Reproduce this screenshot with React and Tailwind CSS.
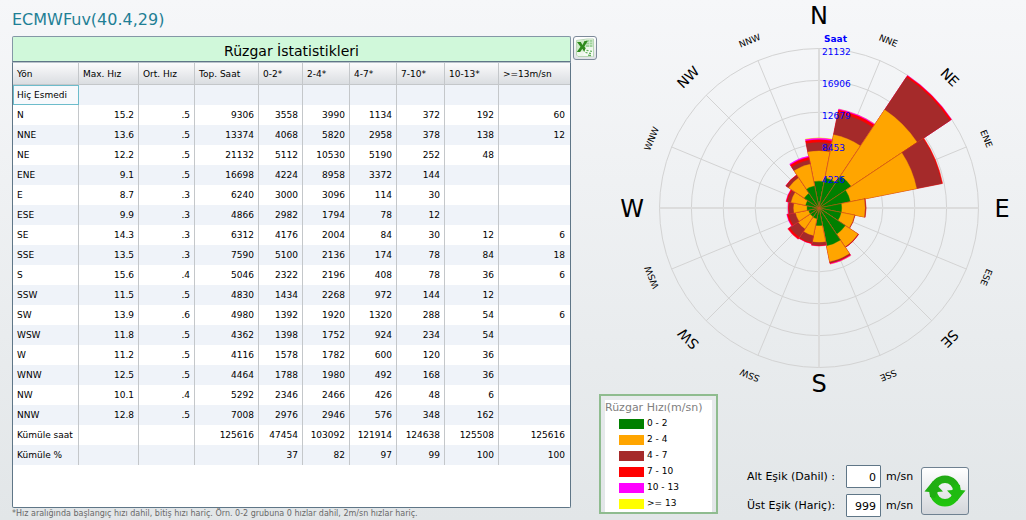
import React, { useState } from "react";

const columns = [
  { title: "Yön", width: "w-[66px]" },
  { title: "Max. Hız", width: "w-[60px]" },
  { title: "Ort. Hız", width: "w-[56px]" },
  { title: "Top. Saat", width: "w-[64px]" },
  { title: "0-2*", width: "w-[44px]" },
  { title: "2-4*", width: "w-[47px]" },
  { title: "4-7*", width: "w-[47px]" },
  { title: "7-10*", width: "w-[48px]" },
  { title: "10-13*", width: "w-[54px]" },
  { title: ">=13m/sn", width: "w-[71px]" },
];

const rows = [
  ["Hiç Esmedi", "", "", "", "", "", "", "", "", ""],
  ["N", "15.2", ".5", 9306, 3558, 3990, 1134, 372, 192, 60],
  ["NNE", "13.6", ".5", 13374, 4068, 5820, 2958, 378, 138, 12],
  ["NE", "12.2", ".5", 21132, 5112, 10530, 5190, 252, 48, ""],
  ["ENE", "9.1", ".5", 16698, 4224, 8958, 3372, 144, "", ""],
  ["E", "8.7", ".3", 6240, 3000, 3096, 114, 30, "", ""],
  ["ESE", "9.9", ".3", 4866, 2982, 1794, 78, 12, "", ""],
  ["SE", "14.3", ".3", 6312, 4176, 2004, 84, 30, 12, 6],
  ["SSE", "13.5", ".3", 7590, 5100, 2136, 174, 78, 84, 18],
  ["S", "15.6", ".4", 5046, 2322, 2196, 408, 78, 36, 6],
  ["SSW", "11.5", ".5", 4830, 1434, 2268, 972, 144, 12, ""],
  ["SW", "13.9", ".6", 4980, 1392, 1920, 1320, 288, 54, 6],
  ["WSW", "11.8", ".5", 4362, 1398, 1752, 924, 234, 54, ""],
  ["W", "11.2", ".5", 4116, 1578, 1782, 600, 120, 36, ""],
  ["WNW", "12.5", ".5", 4464, 1788, 1980, 492, 168, 36, ""],
  ["NW", "10.1", ".4", 5292, 2346, 2466, 426, 48, 6, ""],
  ["NNW", "12.8", ".5", 7008, 2976, 2946, 576, 348, 162, ""],
  ["Kümüle saat", "", "", 125616, 47454, 103092, 121914, 124638, 125508, 125616],
  ["Kümüle %", "", "", "", 37, 82, 97, 99, 100, 100],
];

const speeds = [
  { label: "0 - 2", color: "#008000", swatch: "bg-[#008000]" },
  { label: "2 - 4", color: "#ffa500", swatch: "bg-[#ffa500]" },
  { label: "4 - 7", color: "#a52a2a", swatch: "bg-[#a52a2a]" },
  { label: "7 - 10", color: "#ff0000", swatch: "bg-[#ff0000]" },
  { label: "10 - 13", color: "#ff00ff", swatch: "bg-[#ff00ff]" },
  { label: ">= 13", color: "#ffff00", swatch: "bg-[#ffff00]" },
];

// Wind rose geometry
const CX = 220;
const CY = 208;
const RADIUS = 159.5;
const MAX = 21132;
const ticks = [21132, 16906, 12679, 8453, 4226];
const directions = rows.slice(1, 17);

const point = (angle, r) => {
  const a = (angle * Math.PI) / 180;
  return [CX + r * Math.sin(a), CY - r * Math.cos(a)];
};

const wedge = (angle, r) => {
  const [x1, y1] = point(angle - 11.25, r);
  const [x2, y2] = point(angle + 11.25, r);
  return `M${CX} ${CY}L${x1} ${y1}A${r} ${r} 0 0 1 ${x2} ${y2}Z`;
};

// Main directions are upright, the others turn with the circle
const mainLabels = [
  { name: "N", x: 220, y: 24 },
  { name: "E", x: 403, y: 217 },
  { name: "S", x: 220, y: 392 },
  { name: "W", x: 33, y: 217 },
];

const WindRose = () => (
  <svg viewBox="0 0 427 394" className="block w-full overflow-visible" role="img" aria-label="Rüzgar">
    {ticks.map((t, i) => (
      <circle key={t} cx={CX} cy={CY} r={(RADIUS * (5 - i)) / 5} fill="none" stroke="#d3d3d3" />
    ))}
    {directions.map(([name], i) => {
      const [x, y] = point(i * 22.5, RADIUS);
      const main = i % 4 === 0;
      return (
        <line
          key={name}
          x1={CX}
          y1={CY}
          x2={x}
          y2={y}
          stroke={main ? "#dcdcdc" : "#d3d3d3"}
          strokeWidth={main ? 2 : 1}
        />
      );
    })}

    {directions.map((row, i) => {
      const values = row.slice(4).map(Number);
      return speeds
        .map((s, k) => {
          const total = values.slice(0, k + 1).reduce((a, b) => a + b, 0);
          return values[k] ? (
            <path
              key={row[0] + k}
              d={wedge(i * 22.5, (total / MAX) * RADIUS)}
              fill={s.color}
              stroke={s.color}
              strokeWidth="0.4"
            />
          ) : null;
        })
        .reverse();
    })}
    {directions.map((row, i) => {
      const next = directions[(i + 1) % 16];
      const [x, y] = point(i * 22.5 + 11.25, (Math.min(row[3], next[3]) / MAX) * RADIUS);
      return <line key={row[0]} x1={CX} y1={CY} x2={x} y2={y} stroke="#c8501e" strokeOpacity="0.6" strokeWidth="0.7" />;
    })}

    {mainLabels.map((l) => (
      <text key={l.name} x={l.x} y={l.y} fontSize="24" textAnchor="middle">
        {l.name}
      </text>
    ))}
    {directions.map(([name], i) => {
      if (i % 4 === 0) return null;
      const big = i % 2 === 0;
      return (
        <text
          key={name}
          x={CX}
          y={CY - (big ? 180 : 178)}
          fontSize={big ? 14 : 9}
          textAnchor="middle"
          transform={`rotate(${i * 22.5} ${CX} ${CY})`}
        >
          {name}
        </text>
      );
    })}

    <g fill="#0000ff" fontSize="9">
      <text x="225" y="42" fontWeight="bold">
        Saat
      </text>
      {ticks.map((t, i) => (
        <text key={t} x="223" y={55 + i * 32}>
          {t}
        </text>
      ))}
    </g>
  </svg>
);

const ExcelIcon = () => (
  <svg viewBox="0 0 20 20" className="h-5 w-5">
    <path d="M1.5 2.5 12 1h6.500v17.500H3L1.500 17z" fill="#eef7ec" stroke="#a9cfa6" strokeWidth="0.8" />
    <path d="M11 2h6.5v7H11z" fill="#9fd29b" />
    <path d="M11 4.300h6.500M11 6.600h6.500M14.500 2v7" stroke="#d9efd6" strokeWidth="0.7" />
    <path d="M2 3l9-1.200v12L2 13z" fill="#cfeaca" />
    <path d="M2 4h3.800l1.700 3L9.500 3h3.200L9.400 8.500l3.800 5.700H9.500L7.300 10.800 5.200 14H1.800L5.500 8.700z" fill="#2f8a1e" />
    <path d="M10.500 10.500 18 12v6.500l-10-1z" fill="#f6fcf5" />
    <path d="M11.500 12.300l2 .4M15 13l2 .4M10.500 14.500l2 .4M14 15.200l2 .4M13 17.200l3 .5" stroke="#5fae59" strokeWidth="1.200" />
  </svg>
);

const RefreshIcon = () => (
  <svg viewBox="0 0 44 44" className="h-11 w-11">
    <defs>
      <linearGradient id="arrows" x1="0" y1="0" x2="0" y2="1">
        <stop offset="0" stopColor="#22a814" />
        <stop offset="1" stopColor="#1fc70d" />
      </linearGradient>
    </defs>
    <path
      d="M22 6.500a15.500 15.500 0 1 1 0 31 15.500 15.500 0 1 1 0-31zM22 14a8 8 0 1 0 0 16 8 8 0 1 0 0-16z"
      fill="url(#arrows)"
      fillRule="evenodd"
    />
    <path d="M1.500 22.500 10 12 20 22.500 14.500 23 12 29 7 28 6.500 23z" fill="#1fae12" />
    <path d="M42.500 21.500 34 32 24 21.500 29.500 21 32 15 37 16 37.500 21z" fill="#1fbb10" />
  </svg>
);

const Threshold = ({ id, label, value, onChange }) => (
  <>
    <label htmlFor={id} className="pt-[2px]">
      {label}
    </label>
    <input
      id={id}
      type="text"
      value={value}
      onChange={(e) => onChange(e.target.value)}
      className="h-[23px] w-[35px] rounded-[1px] border border-[#5f7687] bg-white px-1 pt-[2px] text-right"
    />
    <span className="pt-[2px]">m/sn</span>
  </>
);

const App = () => {
  const [min, setMin] = useState("0");
  const [max, setMax] = useState("999");

  return (
    <main className="grid min-h-screen grid-cols-[599fr_427fr] bg-linear-to-b from-[#f6f7f9] to-[#e2e6e8] font-['DejaVu_Sans',Verdana,sans-serif] text-black">
      <section className="flex flex-col pl-3">
        <h1 className="pt-2 text-base leading-6 text-[#1f7f95]">ECMWFuv(40.4,29)</h1>
        <div className="mt-1 flex flex-1 items-start gap-[2px] pr-[2px]">
          <div className="flex flex-1 flex-col self-stretch">
            <h2 className="h-[26px] rounded-t-[2px] border border-[#8497a6] border-b-[#5f7687] bg-[#d0f8da] pt-[2px] text-center text-sm leading-6">
              Rüzgar İstatistikleri
            </h2>
            <div className="flex-1 rounded-b-[2px] border border-[#5f7687] border-t-[#b9c3cb] bg-white">
              <table className="w-full table-fixed border-separate border-spacing-0 text-[9px]">
                <thead>
                  <tr className="h-[22px] bg-linear-to-b from-[#fbfbfc] to-[#d9dce0]">
                    {columns.map((c) => (
                      <th
                        key={c.title}
                        className={`${c.width} border-r border-b border-[#c4c7ca] px-1 pt-[2px] pb-0 text-left font-normal whitespace-nowrap last:border-r-0`}
                      >
                        {c.title}
                      </th>
                    ))}
                  </tr>
                </thead>
                <tbody>
                  {rows.map((row, r) => (
                    <tr key={row[0]} className="h-5 odd:bg-[#eff3f9]">
                      {row.map((cell, i) => (
                        <td
                          key={i}
                          className={
                            i > 0
                              ? "border-r border-[#c4c7ca] px-1 pt-px pb-0 text-right last:border-r-0 last:pr-[5px]"
                              : r > 0
                                ? "border-r border-[#c4c7ca] px-1 pt-px pb-0 whitespace-nowrap"
                                : "border-r border-[#c4c7ca] bg-[#f7f9fc] px-1 pt-px pb-0 whitespace-nowrap outline outline-offset-[-1px] outline-[#6dbccb]"
                          }
                        >
                          {cell}
                        </td>
                      ))}
                    </tr>
                  ))}
                </tbody>
              </table>
            </div>
          </div>
          <button
            type="button"
            aria-label="Excel"
            className="flex h-6 w-6 items-center justify-center rounded-[3px] border border-[#7d8a9a] bg-linear-to-b from-white to-[#dfe2e6]"
          >
            <ExcelIcon />
          </button>
        </div>
        <p className="text-[8px] leading-3 text-[#696969]">
          *Hız aralığında başlangıç hızı dahil, bitiş hızı hariç. Örn. 0-2 grubuna 0 hızlar dahil, 2m/sn hızlar hariç.
        </p>
      </section>

      <section className="flex flex-col justify-between pb-[3px]">
        <WindRose />
        <div className="flex items-end gap-[29px]">
          {/* Açıklama kutusu */}
          <div className="mb-[3px] w-[119px] border-2 border-[#8fbc8f] px-1 pt-1">
            <div className="h-28 bg-white">
              <h3 className="text-[11px] leading-4 whitespace-nowrap text-[#808080]">Rüzgar Hızı(m/sn)</h3>
              <ul className="pl-[14px] text-[9px]">
                {speeds.map((s) => (
                  <li key={s.label} className="flex h-4 gap-[3px] leading-[14px]">
                    <span className={`mt-[3px] h-[10px] w-[25px] ${s.swatch}`} />
                    {s.label}
                  </li>
                ))}
              </ul>
            </div>
          </div>
          <div className="flex items-center gap-2 text-[11px]">
            <div className="grid grid-cols-[94px_auto_auto] items-center gap-x-[5px] gap-y-[6px]">
              <Threshold id="min" label="Alt Eşik (Dahil) :" value={min} onChange={setMin} />
              <Threshold id="max" label="Üst Eşik (Hariç):" value={max} onChange={setMax} />
            </div>
            <button
              type="button"
              aria-label="Yenile"
              className="flex h-12 w-12 items-center justify-center rounded-[3px] border border-[#6f8191] bg-linear-to-b from-white to-[#d3d6db]"
            >
              <RefreshIcon />
            </button>
          </div>
        </div>
      </section>
    </main>
  );
};

export default App;
